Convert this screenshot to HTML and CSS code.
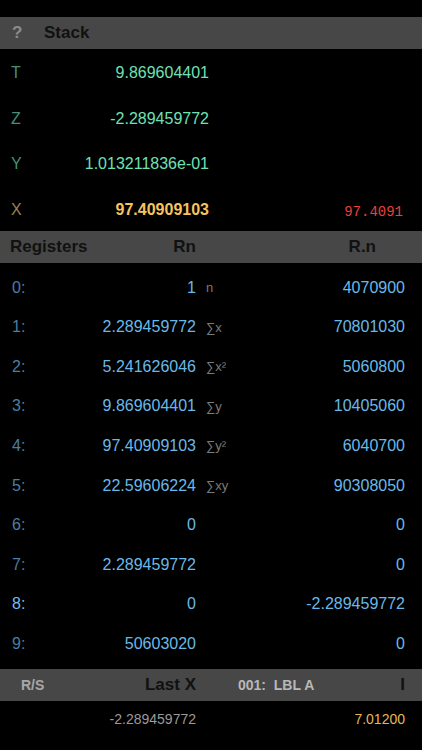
FILE: index.html
```html
<!DOCTYPE html>
<html lang="en">
<head>
  <meta charset="utf-8" />
  <meta name="viewport" content="width=device-width, initial-scale=1.0" />
  <title>RPN Stack</title>
  <link rel="stylesheet" href="styles.css">
</head>
<body>
  <div class="status"></div>

  <div class="bar stack-bar">
    <span class="help">?</span>
    <span class="title">Stack</span>
  </div>

  <div class="stack">
    <div class="stack-row"><span class="lbl">T</span><span class="val">9.869604401</span><span></span></div>
    <div class="stack-row"><span class="lbl">Z</span><span class="val">-2.289459772</span><span></span></div>
    <div class="stack-row"><span class="lbl">Y</span><span class="val">1.013211836e-01</span><span></span></div>
    <div class="stack-row x-row"><span class="lbl">X</span><span class="val">97.40909103</span><span class="lcd">97.4091</span></div>
  </div>

  <div class="bar reg-bar">
    <div class="reg-head"><span>Registers</span><span>Rn</span></div>
    <span class="rdot">R.n</span>
  </div>

  <div class="regs">
    <div class="reg"><span class="num">0:</span><span class="rv">1</span><span class="sig">n</span><span class="rv">4070900</span></div>
    <div class="reg"><span class="num">1:</span><span class="rv">2.289459772</span><span class="sig">∑x</span><span class="rv">70801030</span></div>
    <div class="reg"><span class="num">2:</span><span class="rv">5.241626046</span><span class="sig">∑x²</span><span class="rv">5060800</span></div>
    <div class="reg"><span class="num">3:</span><span class="rv">9.869604401</span><span class="sig">∑y</span><span class="rv">10405060</span></div>
    <div class="reg"><span class="num">4:</span><span class="rv">97.40909103</span><span class="sig">∑y²</span><span class="rv">6040700</span></div>
    <div class="reg"><span class="num">5:</span><span class="rv">22.59606224</span><span class="sig">∑xy</span><span class="rv">90308050</span></div>
    <div class="reg"><span class="num">6:</span><span class="rv">0</span><span class="sig"></span><span class="rv">0</span></div>
    <div class="reg"><span class="num">7:</span><span class="rv">2.289459772</span><span class="sig"></span><span class="rv">0</span></div>
    <div class="reg"><span class="num active">8:</span><span class="rv">0</span><span class="sig"></span><span class="rv">-2.289459772</span></div>
    <div class="reg"><span class="num">9:</span><span class="rv">50603020</span><span class="sig"></span><span class="rv">0</span></div>
  </div>

  <div class="bar prog-bar">
    <span class="rs">R/S</span>
    <span class="lastx">Last X</span>
    <span class="step">001:&nbsp; LBL A</span>
    <span class="ireg">I</span>
  </div>

  <div class="last-row">
    <span class="lx">-2.289459772</span>
    <span></span>
    <span class="iv">7.01200</span>
  </div>
</body>
</html>
```

FILE: styles.css
```css
body {
  margin: 0;
  background: #000;
  font-family: 'Liberation Sans', Arial, sans-serif;
  color: #fff;
}

.status {
  height: 17px;
}

.bar {
  background: #474747;
  height: 32px;
  display: flex;
  align-items: center;
  font-weight: bold;
  color: #111;
  font-size: 17px;
}

/* stack */

.stack-bar {
  padding-left: 12px;
}

.stack-bar .help {
  color: #8c8c8c;
  width: 32px;
}

.stack {
  display: grid;
  grid-auto-rows: 45.5px;
}

.stack-row {
  display: grid;
  grid-template-columns: 28px 170px 1fr;
  align-items: center;
  padding: 3px 19px 0 11px;
  font-size: 16px;
}

.stack-row .lbl {
  color: #44907a;
}

.stack-row .val {
  text-align: right;
  color: #6fe0b4;
}

.x-row .lbl {
  color: #9a8150;
}

.x-row .val {
  color: #f4c45e;
  font-weight: bold;
}

.lcd {
  text-align: right;
  font-family: 'Liberation Mono', monospace;
  font-size: 14px;
  color: #e8403c;
  padding-top: 5px;
}

/* registers */

.reg-bar {
  padding-left: 10px;
}

.reg-head {
  width: 186px;
  display: flex;
  justify-content: space-between;
}

.rdot {
  margin-left: auto;
  margin-right: 46px;
}

.regs {
  display: grid;
  grid-auto-rows: 39.55px;
  padding: 5px 0 6px;
}

.reg {
  display: grid;
  grid-template-columns: 30px 154px 1fr auto;
  align-items: center;
  padding: 0 17px 0 12px;
  font-size: 16px;
  color: #6ab8e8;
}

.reg .num {
  color: #4a7ea2;
}

.reg .num.active {
  color: #72bcec;
}

.reg .rv {
  text-align: right;
}

.reg .sig {
  padding-left: 10px;
  font-size: 13px;
  color: #7a7a7a;
}

/* program line */

.prog-bar {
  display: grid;
  grid-template-columns: 60px 115px 1fr auto;
  padding: 0 17px 0 21px;
}

.prog-bar .rs {
  font-size: 14px;
  color: #a8a8a8;
}

.prog-bar .lastx {
  text-align: right;
  font-size: 17px;
}

.prog-bar .step {
  padding-left: 42px;
  font-size: 14px;
  color: #b8b8b8;
}

.last-row {
  height: 36px;
  display: grid;
  grid-template-columns: 196px 1fr auto;
  align-items: center;
  padding-right: 17px;
  font-size: 14px;
}

.last-row .lx {
  text-align: right;
  color: #9a9a9a;
}

.last-row .iv {
  color: #e6b656;
}
```
